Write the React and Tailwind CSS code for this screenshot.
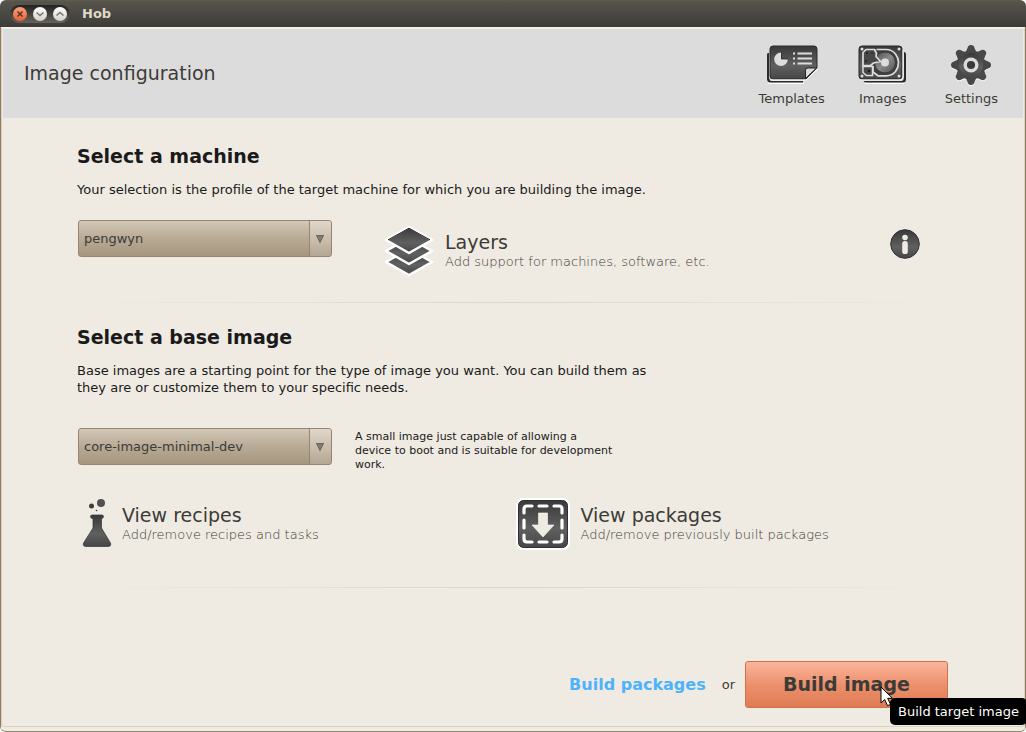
import { useId } from "react";

function Shade({ id }) {
  return (
    <linearGradient id={id} x1="0" y1="0" x2="0" y2="1">
      <stop offset="0" stopColor="#393939" />
      <stop offset="0.6" stopColor="#606060" />
      <stop offset="1" stopColor="#464646" />
    </linearGradient>
  );
}

function TemplatesIcon() {
  const id = useId();
  return (
    <svg width="52" height="40" viewBox="0 0 52 40" aria-hidden="true">
      <defs><Shade id={id} /></defs>
      <path d="M3 8H2Q1 8 1 10V34Q1 37.500 5 37.500H37V36H7Q3 36 3 32Z" fill="#2c2c2c" />
      <path d="M2 38.500H38" stroke="#fff" strokeWidth="1" />
      <path d="M7 1H48Q51 1 51 4V23L40 34H7Q4 34 4 31V4Q4 1 7 1Z" fill={`url(#${id})`} stroke="#2b2b2b" />
      <path d="M15 7.500A6.800 6.800 0 1 0 21.800 14.300H15Z" fill="#ddd" />
      <path d="M15.500 7V13.800H22" stroke="#333" fill="none" />
      <path d="M27 8.500h2M27 13.500h2M27 18.500h2M31.500 8.500H46M31.500 13.500H46M31.500 18.500H46" stroke="#ddd" strokeWidth="1.800" />
      <path d="M39.500 33.500V25Q39.500 23 42 23H50.500Z" fill="#ddd" stroke="#262626" strokeWidth="1" />
      <path d="M4 35H40L51.500 24" stroke="#fff" fill="none" />
    </svg>
  );
}

function ImagesIcon() {
  const id = useId();
  return (
    <svg width="50" height="40" viewBox="0 0 50 40" aria-hidden="true">
      <defs>
        <Shade id={id} />
        <linearGradient id={`${id}p`} x1="0" y1="0" x2="1" y2="1">
          <stop offset="0" stopColor="#4c4c4c" />
          <stop offset=".5" stopColor="#8a8a8a" />
          <stop offset="1" stopColor="#505050" />
        </linearGradient>
      </defs>
      <path d="M46 7Q48 7 48 10V34Q48 37.500 45 37.500H9Q6 37.500 5.500 36H44Q46 35 46 32Z" fill="#292929" />
      <path d="M7 38.500H46" stroke="#fff" />
      <rect x="1" y="1" width="43" height="33" rx="3" fill={`url(#${id})`} stroke="#262626" />
      <path d="M2 35H42Q45 35 45 31.500V5" stroke="#eee" fill="none" />
      <path d="M18.500 4.500H28Q34 4.500 37.500 9Q40.500 13 40.500 17.500Q40.500 22.500 37.500 26.500Q34 30.800 28 30.800H20L15 27V21" fill="#3f3f3f" stroke="#ddd" strokeWidth="1.700" strokeLinejoin="round" />
      <circle cx="27" cy="17.500" r="10.500" fill={`url(#${id}p)`} stroke="#383838" />
      <path d="M8 4.500H16.500L18.500 8.500L18 11.500L22.500 16.500L15.500 18L12.500 20.500H5V7.500Z" fill="#474747" stroke="#ddd" strokeWidth="1.700" strokeLinejoin="round" />
      <path d="M5 21.500H14.500V30.500H8.500L5 27.500Z" fill="#474747" stroke="#ddd" strokeWidth="1.500" />
      <circle cx="27" cy="17.500" r="4" fill="#ddd" />
      <g fill="#ddd">
        <circle cx="4" cy="4" r="1.500" /><circle cx="41" cy="4" r="1.500" />
        <circle cx="4" cy="31" r="1.500" /><circle cx="41" cy="31" r="1.500" />
      </g>
      <g fill="#1c1c1c"><circle cx="9" cy="8" r=".9" /><circle cx="14" cy="8" r=".8" /><circle cx="8" cy="16" r=".9" /><circle cx="11" cy="26" r="1.300" /></g>
    </svg>
  );
}

const teeth = [0, 45, 90, 135, 180, 225, 270, 315];

function SettingsIcon() {
  const id = useId();
  const tooth = "M-8 -11Q-4 -14 -3.500 -17Q-3 -20 0 -20T3.500 -17Q4 -14 8 -11Z";
  return (
    <svg width="42" height="42" viewBox="-21 -21 42 42" aria-hidden="true">
      <defs><Shade id={id} /></defs>
      <g transform="translate(0 1)" fill="#fff">
        {teeth.map((a) => <path key={a} d={tooth} transform={`rotate(${a})`} />)}
      </g>
      <g fill="#484848">
        <circle r="13.800" />
        {teeth.map((a) => <path key={a} d={tooth} transform={`rotate(${a})`} />)}
      </g>
      <circle r="12" fill={`url(#${id})`} />
      <circle r="5.800" fill="#3b3b3b" stroke="#ddd" strokeWidth="3.400" />
    </svg>
  );
}

function LayersIcon() {
  const id = useId();
  return (
    <svg width="50" height="52" viewBox="0 0 50 52" className="shrink-0" aria-hidden="true">
      <defs><Shade id={id} /></defs>
      {[22, 11, 0].map((y) => (
        <path key={y} transform={`translate(0 ${y})`} d="M25 2L48 15L25 28L2 15Z" fill={`url(#${id})`} stroke="#fff" strokeWidth="2.500" strokeLinejoin="round" />
      ))}
      <path d="M4 14.800L25 3.200L46 14.800" fill="none" stroke="#292929" />
    </svg>
  );
}

function InfoIcon() {
  const id = useId();
  return (
    <svg width="30" height="30" viewBox="0 0 30 30" aria-hidden="true">
      <defs><Shade id={id} /></defs>
      <circle cx="15" cy="15" r="14.300" fill={`url(#${id})`} stroke="#333" />
      <circle cx="15" cy="8.500" r="2.800" fill="#efebe3" />
      <rect x="12.200" y="12" width="5.600" height="13" rx="2.600" fill="#efebe3" />
    </svg>
  );
}

function FlaskIcon() {
  const id = useId();
  return (
    <svg width="30" height="52" viewBox="0 -1 30 52" className="shrink-0" aria-hidden="true">
      <defs><Shade id={id} /></defs>
      <circle cx="19" cy="4" r="4" fill="#505050" /><circle cx="9.500" cy="7" r="2.500" fill="#3c3c3c" />
      <circle cx="14.500" cy="11.500" r=".8" fill="#333" />
      <path d="M10 16H20Q21.500 16 21.500 17.500T20 19.500H19.500V29L28.500 44Q29.500 47.500 26 47.500H4Q.5 47.500 1.500 44L11 29V19.500H10Q8.500 19 8.500 17.500T10 16Z" fill={`url(#${id})`} stroke="#353535" strokeWidth=".7" />
    </svg>
  );
}

function PackageIcon() {
  const id = useId();
  return (
    <svg width="54" height="52" viewBox="0 0 54 52" className="shrink-0" aria-hidden="true">
      <defs><Shade id={id} /></defs>
      <rect width="54" height="52" rx="7" fill="#fff" />
      <rect x="2.500" y="2.500" width="49" height="47" rx="5" fill={`url(#${id})`} stroke="#303030" />
      <g fill="none" stroke="#fff" strokeWidth="3.200" strokeLinecap="round">
        <path d="M8 15V11Q8 8 11 8H16M38 8H43Q46 8 46 11V15M46 37V41Q46 44 43 44H38M16 44H11Q8 44 8 41V37M23 8H31M23 44H31M8 22V30M46 22V30" />
      </g>
      <path d="M22.500 15H31.500V27H38L27 39L16 27H22.500Z" fill="#efebe3" stroke="#fff" strokeWidth=".6" />
    </svg>
  );
}

function Dropdown({ label, options }) {
  return (
    <div className="relative h-[37px] w-[254px] shrink-0 overflow-hidden rounded-[3px] border border-[#96866f] bg-linear-to-b from-[#d3c7b8] via-[#b8aa95] to-[#a69680]">
      <select aria-label={label} className="h-full w-full appearance-none bg-transparent pr-7 pl-[5px] text-[13px] text-[#3c3b37] outline-none">
        {options.map((o) => <option key={o}>{o}</option>)}
      </select>
      <span className="pointer-events-none absolute inset-y-0 right-0 flex w-[22px] items-center justify-center border-l border-[#96866f] bg-linear-to-b from-[#e0d8cb] to-[#b5a693] pr-[2px]">
        <svg width="8" height="8" viewBox="0 0 8 8" aria-hidden="true"><path d="M.5 .5H7.500L4 7.500Z" fill="#847c70" stroke="#69635a" /></svg>
      </span>
    </div>
  );
}

function ActionLink({ icon, title, note }) {
  return (
    <button className="flex items-center text-left">
      {icon}
      <span className="block">
        <span className="block text-[19px] leading-[22px] text-[#3c3b37]">{title}</span>
        <span className="block font-['DejaVu_Sans_Light','DejaVu_Sans',sans-serif] text-[13px] leading-[18px] font-extralight text-[#3c3b37]">{note}</span>
      </span>
    </button>
  );
}

function Divider() {
  return <hr className="h-px border-0 bg-linear-to-r from-transparent via-[#dcd5c3] to-transparent" />;
}

function WindowButton({ label, close, d }) {
  return (
    <button aria-label={label} className={`flex h-[14px] w-[14px] items-center justify-center rounded-full ${close ? "bg-linear-to-b from-[#f9a080] to-[#e95f2c]" : "bg-linear-to-b from-white to-[#d5d1c7]"}`}>
      <svg width="8" height="8" viewBox="0 0 8 8" fill="none" stroke={close ? "#5b3224" : "#77746c"} strokeWidth="1.500" aria-hidden="true"><path d={d} /></svg>
    </button>
  );
}

function ToolButton({ icon, label }) {
  return (
    <button className="flex flex-col items-center">
      <span className="flex h-[42px] items-center">{icon}</span>
      <span className="mt-1 leading-[18px] text-[#3c3b37]">{label}</span>
    </button>
  );
}

export default function App() {
  return (
    <div className="flex min-h-screen flex-col overflow-hidden rounded-[6px] border-b border-[#958871] bg-[#efebe3] font-['DejaVu_Sans',sans-serif] text-[13px] text-[#1a1a1a]">
      <div className="flex h-[27px] items-center border-t border-[#5f5a4e] bg-linear-to-b from-[#57554d] to-[#3c3b37] pl-[10px]">
        <div className="flex h-[18px] items-center gap-[6px] rounded-full bg-linear-to-b from-[#24231f] to-[#66645c] px-[3px]">
          <WindowButton label="Close" close d="M1.500 1.500L6.500 6.500M6.500 1.500L1.500 6.500" />
          <WindowButton label="Minimize" d="M.5 2.500L4 5.500L7.500 2.500" />
          <WindowButton label="Maximize" d="M.5 5.500L4 2.500L7.500 5.500" />
        </div>
        <span className="ml-3 font-bold text-[#dfd8c8]">Hob</span>
      </div>

      <div className="flex grow flex-col border-r border-l border-[#8b7b64]">
        <div className="flex grow flex-col rounded-t-[3px] rounded-b-[3px] border border-[#ddd2bd] border-t-[#f8f3e9] px-px pt-px">
          <header className="flex h-[89px] items-center justify-between bg-[#dcdcdc] pr-[25px] pl-[21px]">
            <h1 className="text-[19px] text-[#3c3b37]">Image configuration</h1>
            <div className="flex gap-[33px] pt-1">
              <ToolButton icon={<TemplatesIcon />} label="Templates" />
              <ToolButton icon={<ImagesIcon />} label="Images" />
              <div className="ml-1"><ToolButton icon={<SettingsIcon />} label="Settings" /></div>
            </div>
          </header>

          <main className="flex grow flex-col pr-[75px] pl-[74px]">
            <section aria-labelledby="machine">
              <h2 id="machine" className="pt-[26px] text-[19px] leading-6 font-bold">Select a machine</h2>
              <p className="mt-[13px] leading-[17px]">Your selection is the profile of the target machine for which you are building the image.</p>
              <div className="mt-[22px] flex items-start pl-px">
                <Dropdown label="Machine" options={["pengwyn"]} />
                <div className="ml-[52px] pt-[5px]">
                  <ActionLink icon={<span className="mr-[11px]"><LayersIcon /></span>} title="Layers" note="Add support for machines, software, etc." />
                </div>
                <button aria-label="About layers" className="mt-[9px] mr-[28px] ml-auto"><InfoIcon /></button>
              </div>
            </section>

            <div className="mt-[25px]"><Divider /></div>

            <section aria-labelledby="base">
              <h2 id="base" className="mt-[22px] text-[19px] leading-6 font-bold">Select a base image</h2>
              <p className="mt-[13px] max-w-[580px] leading-[17px]">Base images are a starting point for the type of image you want. You can build them as they are or customize them to your specific needs.</p>
              <div className="mt-8 flex items-start pl-px">
                <Dropdown label="Base image" options={["core-image-minimal-dev"]} />
                <p className="mt-[2px] ml-[23px] max-w-[270px] text-[11px] leading-[14px]">A small image just capable of allowing a<br />device to boot and is suitable for development work.</p>
              </div>
              <div className="mt-[26px] grid grid-cols-2">
                <div className="pl-[5px]">
                  <ActionLink icon={<span className="mr-[10px]"><FlaskIcon /></span>} title="View recipes" note="Add/remove recipes and tasks" />
                </div>
                <div className="pl-[3px]">
                  <ActionLink icon={<span className="mr-[11px]"><PackageIcon /></span>} title="View packages" note="Add/remove previously built packages" />
                </div>
              </div>
            </section>

            <div className="mt-[37px]"><Divider /></div>

            <div className="mt-auto mb-[18px] flex items-center justify-end pt-6">
              <a href="#packages" className="text-[16px] font-bold text-[#4eb3fb]">Build packages</a>
              <span className="mr-[10px] ml-4 text-[#3c3b37]">or</span>
              <div className="relative">
                <button aria-describedby="tip" className="h-[47px] w-[203px] rounded-[3px] border border-[#d0714d] bg-linear-to-b from-[#fab59c] via-[#ec916d] to-[#df7b53] text-[19px] font-bold text-[#3c3b37]">Build image</button>
                <div id="tip" role="tooltip" className="absolute top-[37px] left-[145px] rounded-[5px] bg-black px-2 py-[5px] leading-[17px] whitespace-nowrap text-white">Build target image</div>
                <svg width="14" height="21" viewBox="0 0 14 21" className="absolute top-[25px] left-[135px]" aria-hidden="true">
                  <path d="M1 1V17L4.700 13.500L7.500 19.700L10.500 18.400L7.700 12.300H12.500Z" fill="#fff" stroke="#000" strokeWidth="1" />
                </svg>
              </div>
            </div>
          </main>
        </div>
        <div className="h-1" />
      </div>
    </div>
  );
}
